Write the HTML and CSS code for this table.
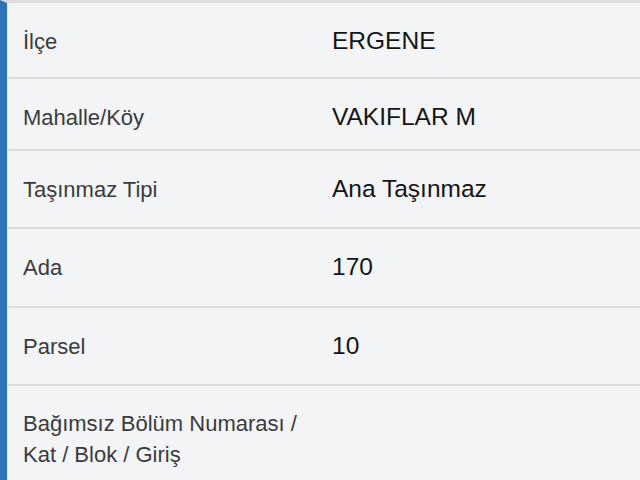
FILE: index.html
```html
<!DOCTYPE html>
<html lang="tr">
<head>
<meta charset="utf-8">
<link rel="stylesheet" href="styles.css">
</head>
<body>
<div class="sheet">
  <div class="row r1"><div class="label">İlçe</div><div class="value">ERGENE</div></div>
  <div class="row r2"><div class="label">Mahalle/Köy</div><div class="value">VAKIFLAR M</div></div>
  <div class="row r3"><div class="label">Taşınmaz Tipi</div><div class="value">Ana Taşınmaz</div></div>
  <div class="row r4"><div class="label">Ada</div><div class="value">170</div></div>
  <div class="row r5"><div class="label">Parsel</div><div class="value">10</div></div>
  <div class="row r6"><div class="label">Bağımsız Bölüm Numarası / Kat / Blok / Giriş</div><div class="value"></div></div>
</div>
</body>
</html>
```
FILE: styles.css
```css
html, body {
  margin: 0;
  padding: 0;
  background: #f3f4f6;
}
.sheet {
  height: 480px;
  overflow: hidden;
  box-sizing: border-box;
  border-left: 7px solid #2f73b7;
  border-top: 3px solid #dcdde0;
  background: #f3f4f6;
  font-family: "Liberation Sans", Arial, sans-serif;
  box-shadow: inset 1px 0 0 #dfe6ee;
}
.row {
  display: grid;
  grid-template-columns: 296px 1fr;
  column-gap: 13px;
  align-items: baseline;
  align-content: start;
  box-sizing: border-box;
  padding: 22px 0 0 16px;
  border-bottom: 2px solid #dcdddf;
}
.r1 { height: 76px; }
.r2 { height: 72px; }
.r3 { height: 78px; }
.r4 { height: 79px; }
.r5 { height: 78px; }
.r6 { border-bottom: none; }
.label {
  font-size: 22px;
  line-height: 31px;
  color: #3b3b3d;
}
.value {
  font-size: 24.5px;
  line-height: 31px;
  color: #151515;
}
```
